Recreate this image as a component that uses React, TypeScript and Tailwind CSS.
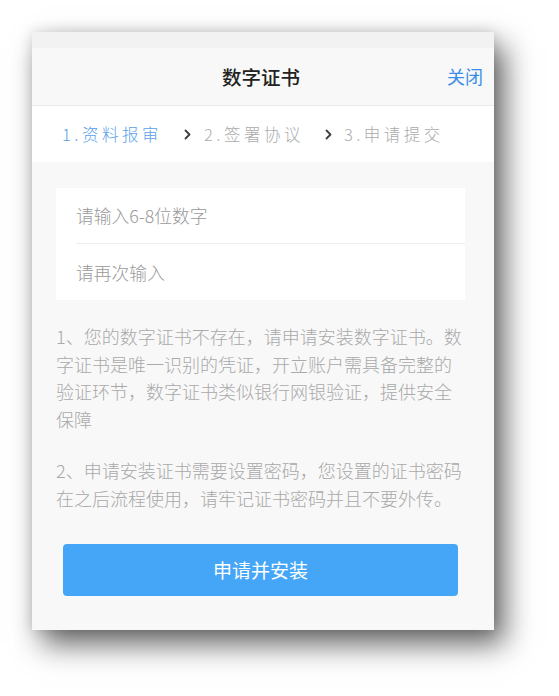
import React from "react";

const Chevron = () => (
  <svg width="7" height="11" viewBox="0 0 7 11" className="shrink-0">
    <polyline points="1.5,1.5 5.5,5.5 1.5,9.5" fill="none" stroke="#3d3d3d" strokeWidth="1.8" strokeLinecap="round" strokeLinejoin="round" />
  </svg>
);

export default function App() {
  return (
    <div className="w-[559px] h-[696px] bg-white pt-[32px] pl-[32px] font-['Noto_Sans_CJK_SC','Noto_Sans',sans-serif]">
      <div className="w-[462px] h-[598px] flex flex-col bg-[#f8f8f8] shadow-[10px_14px_28px_rgba(0,0,0,0.62),0_0_12px_rgba(0,0,0,0.12)]">
        <div className="h-[16px] bg-[#f2f2f2]" />
        <div className="h-[58px] grid grid-cols-[1fr_auto_1fr] items-center bg-[#f8f8f8] border-b border-[#ebebeb]">
          <div />
          <div className="text-[19.5px] font-medium text-[#222] pr-[4px]">数字证书</div>
          <div className="justify-self-end pr-[11px] text-[18px] text-[#3b8ee8]">关闭</div>
        </div>
        <div className="h-[56px] bg-white flex items-center pl-[30px] text-[16.5px] tracking-[3.5px] font-light">
          <span className="text-[#5a9fe9]">1.资料报审</span>
          <span className="ml-[22px] mr-[13px] flex"><Chevron /></span>
          <span className="text-[#acacac]">2.签署协议</span>
          <span className="ml-[21px] mr-[12px] flex"><Chevron /></span>
          <span className="text-[#acacac]">3.申请提交</span>
        </div>
        <div className="flex-1 flex flex-col pl-[24px] pr-[29px] pt-[26px]">
          <div className="bg-white flex flex-col">
            <div className="h-[55px] flex items-center pl-[20px]">
              <input
                className="w-full bg-transparent outline-none text-[17.8px] font-light text-[#333] placeholder:text-[#999]"
                placeholder="请输入6-8位数字"
              />
            </div>
            <div className="ml-[20px] h-px bg-[#eeeeee]" />
            <div className="h-[56px] flex items-center pl-[20px]">
              <input
                className="w-full bg-transparent outline-none text-[17.8px] font-light text-[#333] placeholder:text-[#999]"
                placeholder="请再次输入"
              />
            </div>
          </div>
          <div className="mt-[23px] text-[18px] leading-[27.5px] text-[#a9a9a9] font-light">
            <p className="flex flex-col whitespace-nowrap">
              <span>1、您的数字证书不存在，请申请安装数字证书。数</span>
              <span>字证书是唯一识别的凭证，开立账户需具备完整的</span>
              <span>验证环节，数字证书类似银行网银验证，提供安全</span>
              <span>保障</span>
            </p>
            <p className="mt-[24px] flex flex-col whitespace-nowrap">
              <span>2、申请安装证书需要设置密码，您设置的证书密码</span>
              <span>在之后流程使用，请牢记证书密码并且不要外传。</span>
            </p>
          </div>
          <button className="mt-[32px] mx-[7px] h-[52px] rounded-[4px] bg-[#45a6f7] text-white text-[19px] flex items-center justify-center">
            申请并安装
          </button>
        </div>
      </div>
    </div>
  );
}
